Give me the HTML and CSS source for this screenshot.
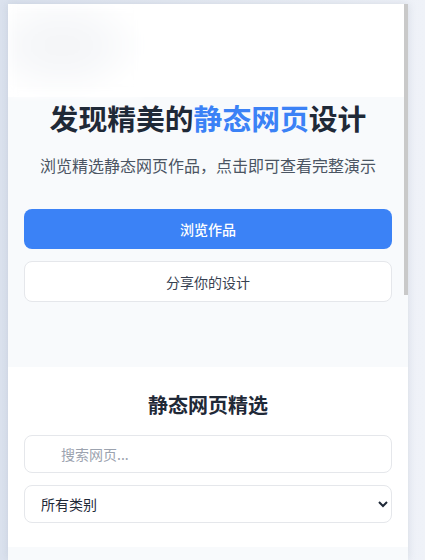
FILE: index.html
```html
<!DOCTYPE html>
<html lang="zh-CN">
<head>
<meta charset="utf-8">
<title>静态网页设计</title>
<link rel="stylesheet" href="styles.css">
</head>
<body>
<div class="frame">
  <div class="scroll-thumb"></div>
  <header class="topbar">
    <div class="logo-blur"></div>
  </header>
  <section class="hero">
    <h1 class="hero-title">发现精美的<span class="accent">静态网页</span>设计</h1>
    <p class="hero-sub">浏览精选静态网页作品，点击即可查看完整演示</p>
    <div class="hero-actions">
      <a class="btn btn-primary" href="#">浏览作品</a>
      <a class="btn btn-outline" href="#">分享你的设计</a>
    </div>
  </section>
  <section class="gallery-head">
    <h2 class="section-title">静态网页精选</h2>
    <div class="filters">
      <input class="search" type="text" placeholder="搜索网页...">
      <select class="category">
        <option>所有类别</option>
        <option>个人主页</option>
        <option>企业官网</option>
        <option>作品集</option>
      </select>
    </div>
  </section>
  <section class="gallery"></section>
</div>
</body>
</html>
```

FILE: styles.css
```css
* { box-sizing: border-box; }

html, body {
  height: 100%;
}

body {
  margin: 0;
  padding: 4px 0 0 8px;
  background: linear-gradient(to right, #dbe2ee 0%, #e6ebf3 50%, #eff2f8 100%);
  font-family: "Noto Sans CJK SC", "Noto Sans", sans-serif;
  overflow: hidden;
}

.frame {
  position: relative;
  width: 400px;
  height: 556px;
  overflow: hidden;
  background: #ffffff;
  box-shadow: 0 0 8px rgba(100, 116, 139, 0.18);
}

.scroll-thumb {
  position: absolute;
  top: 0;
  right: 0;
  width: 4px;
  height: 291px;
  background: #c9c9c9;
  z-index: 2;
}

.topbar {
  height: 93px;
  background: #ffffff;
  display: flex;
}

.logo-blur {
  width: 135px;
  height: 92px;
  background: radial-gradient(ellipse 62% 58% at 40% 45%, #f4f5f7 0%, #f7f8fa 45%, #ffffff 100%);
  filter: blur(5px);
}

.hero {
  background: #f8fafc;
  padding: 4px 16px 65px;
  text-align: center;
}

.hero-title {
  margin: 0;
  font-size: 28.8px;
  line-height: 34px;
  font-weight: 700;
  color: #1f2937;
}

.accent {
  color: #3b82f6;
}

.hero-sub {
  margin: 18px 0 0;
  font-size: 16px;
  line-height: 24px;
  color: #4b5563;
}

.hero-actions {
  margin-top: 32px;
  display: flex;
  flex-direction: column;
  gap: 12px;
}

.btn {
  display: flex;
  align-items: center;
  justify-content: center;
  border-radius: 8px;
  font-size: 14px;
  text-decoration: none;
}

.btn-primary {
  height: 40px;
  background: #3b82f6;
  color: #ffffff;
  font-weight: 500;
}

.btn-outline {
  height: 41px;
  background: #ffffff;
  border: 1px solid #e5e7eb;
  color: #374151;
}

.gallery-head {
  background: #ffffff;
  padding: 24px 16px;
}

.section-title {
  margin: 0 0 16px;
  text-align: center;
  font-size: 20px;
  line-height: 28px;
  font-weight: 700;
  color: #1f2937;
}

.filters {
  display: flex;
  flex-direction: column;
  gap: 12px;
}

.search,
.category {
  width: 100%;
  height: 38px;
  border: 1px solid #e5e7eb;
  border-radius: 8px;
  background: #ffffff;
  font-family: inherit;
  font-size: 14px;
  color: #1f2937;
  outline: none;
}

.search {
  padding: 0 12px 0 36px;
}

.search::placeholder {
  color: #9ca3af;
}

.category {
  padding: 0 2px 0 12px;
}

.gallery {
  background: #f8fafc;
  height: 520px;
}
```
